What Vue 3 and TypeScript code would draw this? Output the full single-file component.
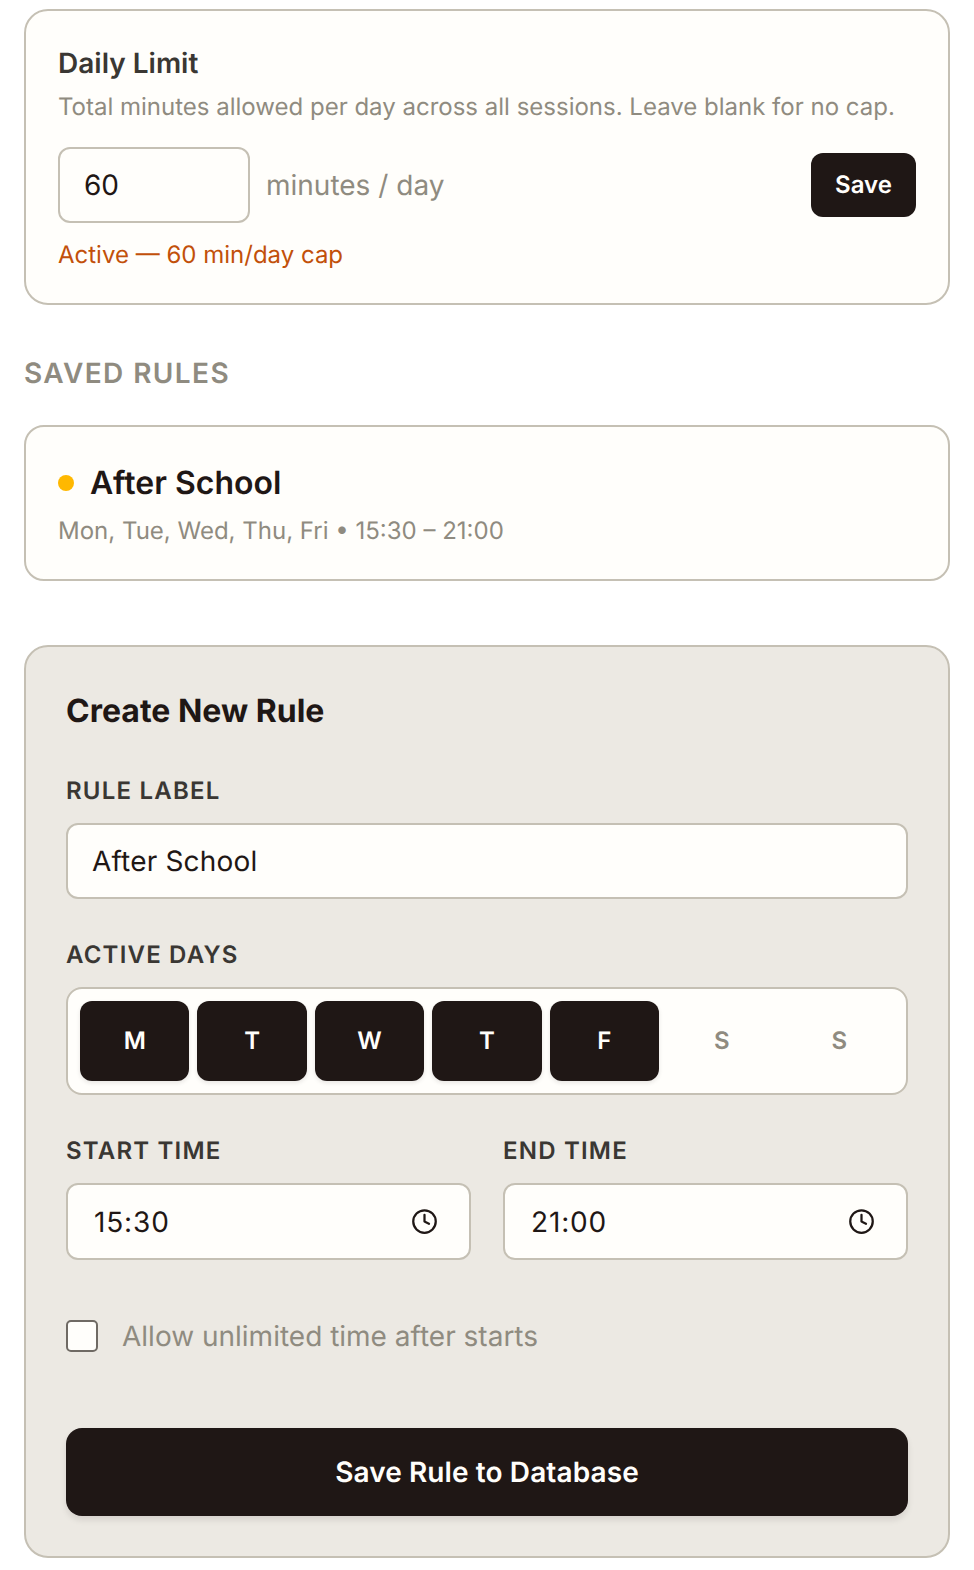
<script setup lang="ts">
interface Day { letter: string; active: boolean }
const days: Day[] = [
  { letter: 'M', active: true },
  { letter: 'T', active: true },
  { letter: 'W', active: true },
  { letter: 'T', active: true },
  { letter: 'F', active: true },
  { letter: 'S', active: false },
  { letter: 'S', active: false },
]
const times = [
  { label: 'START TIME', value: '15:30' },
  { label: 'END TIME', value: '21:00' },
]
</script>

<template>
  <div class="page">
    <section class="card limit">
      <h2 class="limit-title">Daily Limit</h2>
      <p class="limit-sub">Total minutes allowed per day across all sessions. Leave blank for no cap.</p>
      <div class="limit-row">
        <input class="field limit-input" type="text" value="60" />
        <span class="limit-unit">minutes / day</span>
        <button class="btn save" type="button">Save</button>
      </div>
      <p class="limit-status">Active — 60 min/day cap</p>
    </section>

    <h3 class="section-label">SAVED RULES</h3>

    <section class="card rule">
      <div class="rule-head">
        <span class="dot"></span>
        <span class="rule-name">After School</span>
      </div>
      <p class="rule-meta">Mon, Tue, Wed, Thu, Fri • 15:30 – 21:00</p>
    </section>

    <section class="create">
      <h2 class="create-title">Create New Rule</h2>

      <label class="label">RULE LABEL</label>
      <input class="field wide" type="text" value="After School" />

      <label class="label">ACTIVE DAYS</label>
      <div class="days">
        <button
          v-for="(d, i) in days"
          :key="i"
          type="button"
          class="day"
          :class="{ on: d.active }"
        >{{ d.letter }}</button>
      </div>

      <div class="times">
        <div v-for="t in times" :key="t.label" class="time-col">
          <label class="label tight">{{ t.label }}</label>
          <div class="time-box">
            <input class="field time" type="text" :value="t.value" />
            <svg class="clock" viewBox="0 0 24 24" fill="none" stroke="currentColor" stroke-width="2" stroke-linecap="round" stroke-linejoin="round">
              <circle cx="12" cy="12" r="10" />
              <path d="M12 6v6l4 2" />
            </svg>
          </div>
        </div>
      </div>

      <label class="check-row">
        <span class="check"></span>
        <span class="check-text">Allow unlimited time after starts</span>
      </label>

      <button class="btn submit" type="button">Save Rule to Database</button>
    </section>
  </div>
</template>

<style>
html, body { margin: 0; background: #ffffff; }
</style>

<style scoped>
* { box-sizing: border-box; }
.page {
  width: 974px;
  height: 1570px;
  padding: 9px 24px 0;
  font-family: Inter, "Liberation Sans", sans-serif;
  color: #1f1715;
  overflow: hidden;
  text-rendering: geometricPrecision;
}
.card {
  background: #fffefb;
  border: 2px solid #c5c0b4;
}
.limit {
  height: 296px;
  border-radius: 24px;
  padding: 32px 32px 0;
}
.limit-title {
  margin: 0;
  font-size: 28px;
  line-height: 40px;
  font-weight: 600;
  color: #3a3733;
}
.limit-sub {
  margin: 6px 0 0;
  font-size: 24px;
  line-height: 36px;
  color: #8f8b80;
}
.limit-row {
  display: flex;
  align-items: center;
  margin-top: 22px;
}
.field {
  display: block;
  background: #fffefb;
  border: 2px solid #c5c0b4;
  border-radius: 12px;
  font-family: inherit;
  font-size: 28px;
  color: #1f1715;
  outline: none;
  text-rendering: geometricPrecision;
}
.limit-input {
  width: 192px;
  height: 76px;
  padding: 0 24px;
}
.limit-unit {
  margin-left: 16px;
  font-size: 28px;
  color: #8f8b80;
}
.btn {
  border: none;
  background: #1f1715;
  color: #fffefb;
  font-family: inherit;
  font-weight: 600;
  text-rendering: geometricPrecision;
}
.save {
  margin-left: auto;
  width: 105px;
  height: 64px;
  padding: 0 0 2px;
  border-radius: 12px;
  font-size: 24px;
}
.limit-status {
  margin: 14px 0 0;
  font-size: 24px;
  line-height: 36px;
  color: #c2500a;
}
.section-label {
  margin: 51px 0 0;
  font-size: 28px;
  line-height: 34px;
  font-weight: 600;
  letter-spacing: 1.4px;
  color: #8f8b80;
}
.rule {
  margin-top: 35px;
  height: 156px;
  border-radius: 20px;
  padding: 32px 32px 0;
}
.rule-head {
  display: flex;
  align-items: center;
  gap: 16px;
  height: 46px;
}
.dot {
  width: 16px;
  height: 16px;
  margin-top: 2px;
  border-radius: 50%;
  background: #ffb800;
}
.rule-name {
  font-size: 32px;
  font-weight: 600;
  color: #1f1715;
}
.rule-meta {
  margin: 8px 0 0;
  font-size: 24px;
  line-height: 36px;
  color: #8f8b80;
}
.create {
  margin-top: 64px;
  height: 913px;
  background: #ece9e3;
  border: 2px solid #c5c0b4;
  border-radius: 24px;
  padding: 40px 40px 0;
}
.create-title {
  margin: 0;
  font-size: 32px;
  line-height: 48px;
  font-weight: 700;
  color: #1f1715;
}
.label {
  display: block;
  margin: 40px 0 16px;
  font-size: 24px;
  line-height: 32px;
  font-weight: 600;
  letter-spacing: 1.2px;
  color: #3a3733;
}
.label.tight { margin-top: 0; }
.wide {
  width: 100%;
  height: 76px;
  padding: 0 24px;
  letter-spacing: 0.18px;
}
.days {
  display: grid;
  grid-template-columns: repeat(7, 1fr);
  gap: 8px;
  height: 108px;
  padding: 12px;
  background: #fffefb;
  border: 2px solid #c5c0b4;
  border-radius: 16px;
}
.day {
  border: none;
  background: transparent;
  border-radius: 12px;
  padding: 0 0 2px;
  font-family: inherit;
  font-size: 24px;
  font-weight: 600;
  color: #8f8b80;
  text-rendering: geometricPrecision;
}
.day.on {
  background: #1f1715;
  color: #fffefb;
  box-shadow: 0 2px 4px rgba(31, 23, 21, 0.1);
}
.times {
  display: grid;
  grid-template-columns: 1fr 1fr;
  gap: 32px;
  margin-top: 40px;
}
.time-box { position: relative; }
.time {
  width: 100%;
  height: 77px;
  padding: 0 26px;
  letter-spacing: 0.85px;
}
.clock {
  position: absolute;
  right: 33px;
  top: 25px;
  width: 27px;
  height: 27px;
  color: #1f1715;
}
.check-row {
  display: flex;
  align-items: center;
  gap: 24px;
  margin-top: 59px;
}
.check {
  width: 32px;
  height: 32px;
  background: #fffefb;
  border: 2px solid #6f6a64;
  border-radius: 5px;
}
.check-text {
  font-size: 28px;
  color: #8f8b80;
}
.submit {
  display: block;
  width: 100%;
  height: 88px;
  margin-top: 75px;
  border-radius: 16px;
  font-size: 28px;
  letter-spacing: 0.1px;
  box-shadow: 0 4px 6px rgba(31, 23, 21, 0.1);
}
</style>
